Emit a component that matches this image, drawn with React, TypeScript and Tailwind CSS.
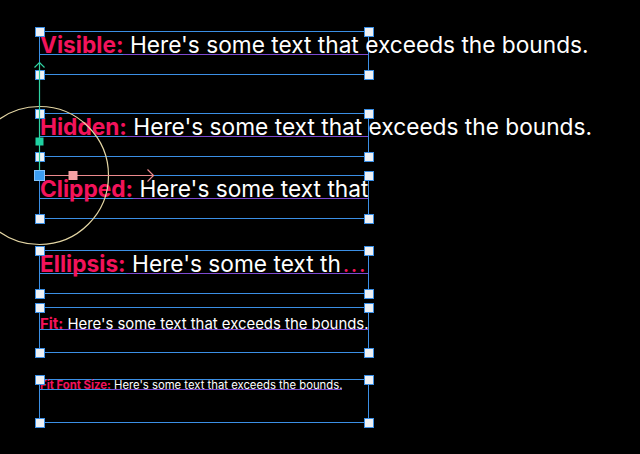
import React from 'react'

type Row = {
  label: string
  body: string
  mode: 'visible' | 'hidden' | 'clipped' | 'ellipsis' | 'fit' | 'fitFont'
  gap: string
}

const rows: Row[] = [
  { label: 'Visible:', body: "Here's some text that exceeds the bounds.", mode: 'visible', gap: 'mt-[31px]' },
  { label: 'Hidden:', body: "Here's some text that exceeds the bounds.", mode: 'hidden', gap: 'mt-[38px]' },
  { label: 'Clipped:', body: "Here's some text that exceeds the bounds.", mode: 'clipped', gap: 'mt-[18px]' },
  { label: 'Ellipsis:', body: "Here's some text th", mode: 'ellipsis', gap: 'mt-[31px]' },
  { label: 'Fit:', body: "Here's some text that exceeds the bounds.", mode: 'fit', gap: 'mt-[13px]' },
  { label: 'Fit Font Size:', body: "Here's some text that exceeds the bounds.", mode: 'fitFont', gap: 'mt-[26px]' },
]

function Handles() {
  const h = 'absolute w-[10px] h-[10px] border border-[#3b8fe5] bg-[#eef1f5]'
  return (
    <>
      <div className={`${h} -left-[5.5px] -top-[5.5px]`} />
      <div className={`${h} -right-[5.5px] -top-[5.5px]`} />
      <div className={`${h} -left-[5.5px] -bottom-[5.5px]`} />
      <div className={`${h} -right-[5.5px] -bottom-[5.5px]`} />
    </>
  )
}

function TextBox({ row }: { row: Row }) {
  const big = row.mode !== 'fit' && row.mode !== 'fitFont'
  const size = big
    ? 'text-[22.7px] pt-[2px]'
    : row.mode === 'fit'
      ? 'text-[14.9px] pt-[8.5px]'
      : 'text-[11.3px] pt-0'
  const pieceH = big ? 'h-[20.5px]' : row.mode === 'fit' ? 'h-[13px]' : 'h-[10px]'

  return (
    <div
      className={`relative w-[330px] border border-[#3b8fe5] ${row.gap} ${row.mode === 'fit' ? 'h-[46px]' : 'h-[44px]'}`}
    >
      <div className={`h-full ${row.mode === 'clipped' ? 'overflow-hidden' : ''}`}>
        <div className={`flex whitespace-pre leading-none ${size}`}>
          <div className={`${pieceH} shrink-0 border-b border-[#3b8fe5] font-bold text-[#f3135b]`}>
            {row.label}
          </div>
          <div
            className={`${pieceH} ${row.mode === 'fitFont' ? 'shrink-0' : 'min-w-0 flex-1'} border-b border-[#7d4ad2] text-white`}
          >
            {' '}
            {row.body}
            {row.mode === 'ellipsis' && (
              <span className="pl-[2px] tracking-[1.5px] text-[#f3135b]">...</span>
            )}
          </div>
        </div>
      </div>
      <Handles />
    </div>
  )
}

export default function App() {
  return (
    <div className="relative h-[454px] w-[640px] overflow-hidden bg-black font-['Inter','Liberation_Sans',sans-serif]">
      <div className="flex flex-col pl-[39px]">
        {rows.map((r) => (
          <TextBox key={r.label} row={r} />
        ))}
      </div>

      {/* transform gizmo */}
      <svg className="pointer-events-none absolute left-0 top-0" width="640" height="454" viewBox="0 0 640 454">
        <circle cx="39.5" cy="175.5" r="69" fill="none" stroke="#e4d6a4" strokeWidth="1.2" />
        <line x1="39.5" y1="62" x2="39.5" y2="175" stroke="#2fd3a2" strokeWidth="1.2" />
        <polyline points="34.5,67.5 39.5,62.5 44.5,67.5" fill="none" stroke="#2fd3a2" strokeWidth="1.2" />
        <rect x="35.5" y="137.5" width="8" height="8" fill="#1fd1a1" />
        <line x1="39.5" y1="175.5" x2="153" y2="175.5" stroke="#ec8a8e" strokeWidth="1.2" />
        <polyline points="147.5,169.5 153.5,175.5 147.5,181.5" fill="none" stroke="#ec8a8e" strokeWidth="1.2" />
        <rect x="68.5" y="171" width="9" height="9" fill="#f4a2a4" />
        <rect x="34.5" y="170.5" width="10" height="10" fill="#3c9df2" stroke="#82c4ff" strokeWidth="1" />
      </svg>
    </div>
  )
}
